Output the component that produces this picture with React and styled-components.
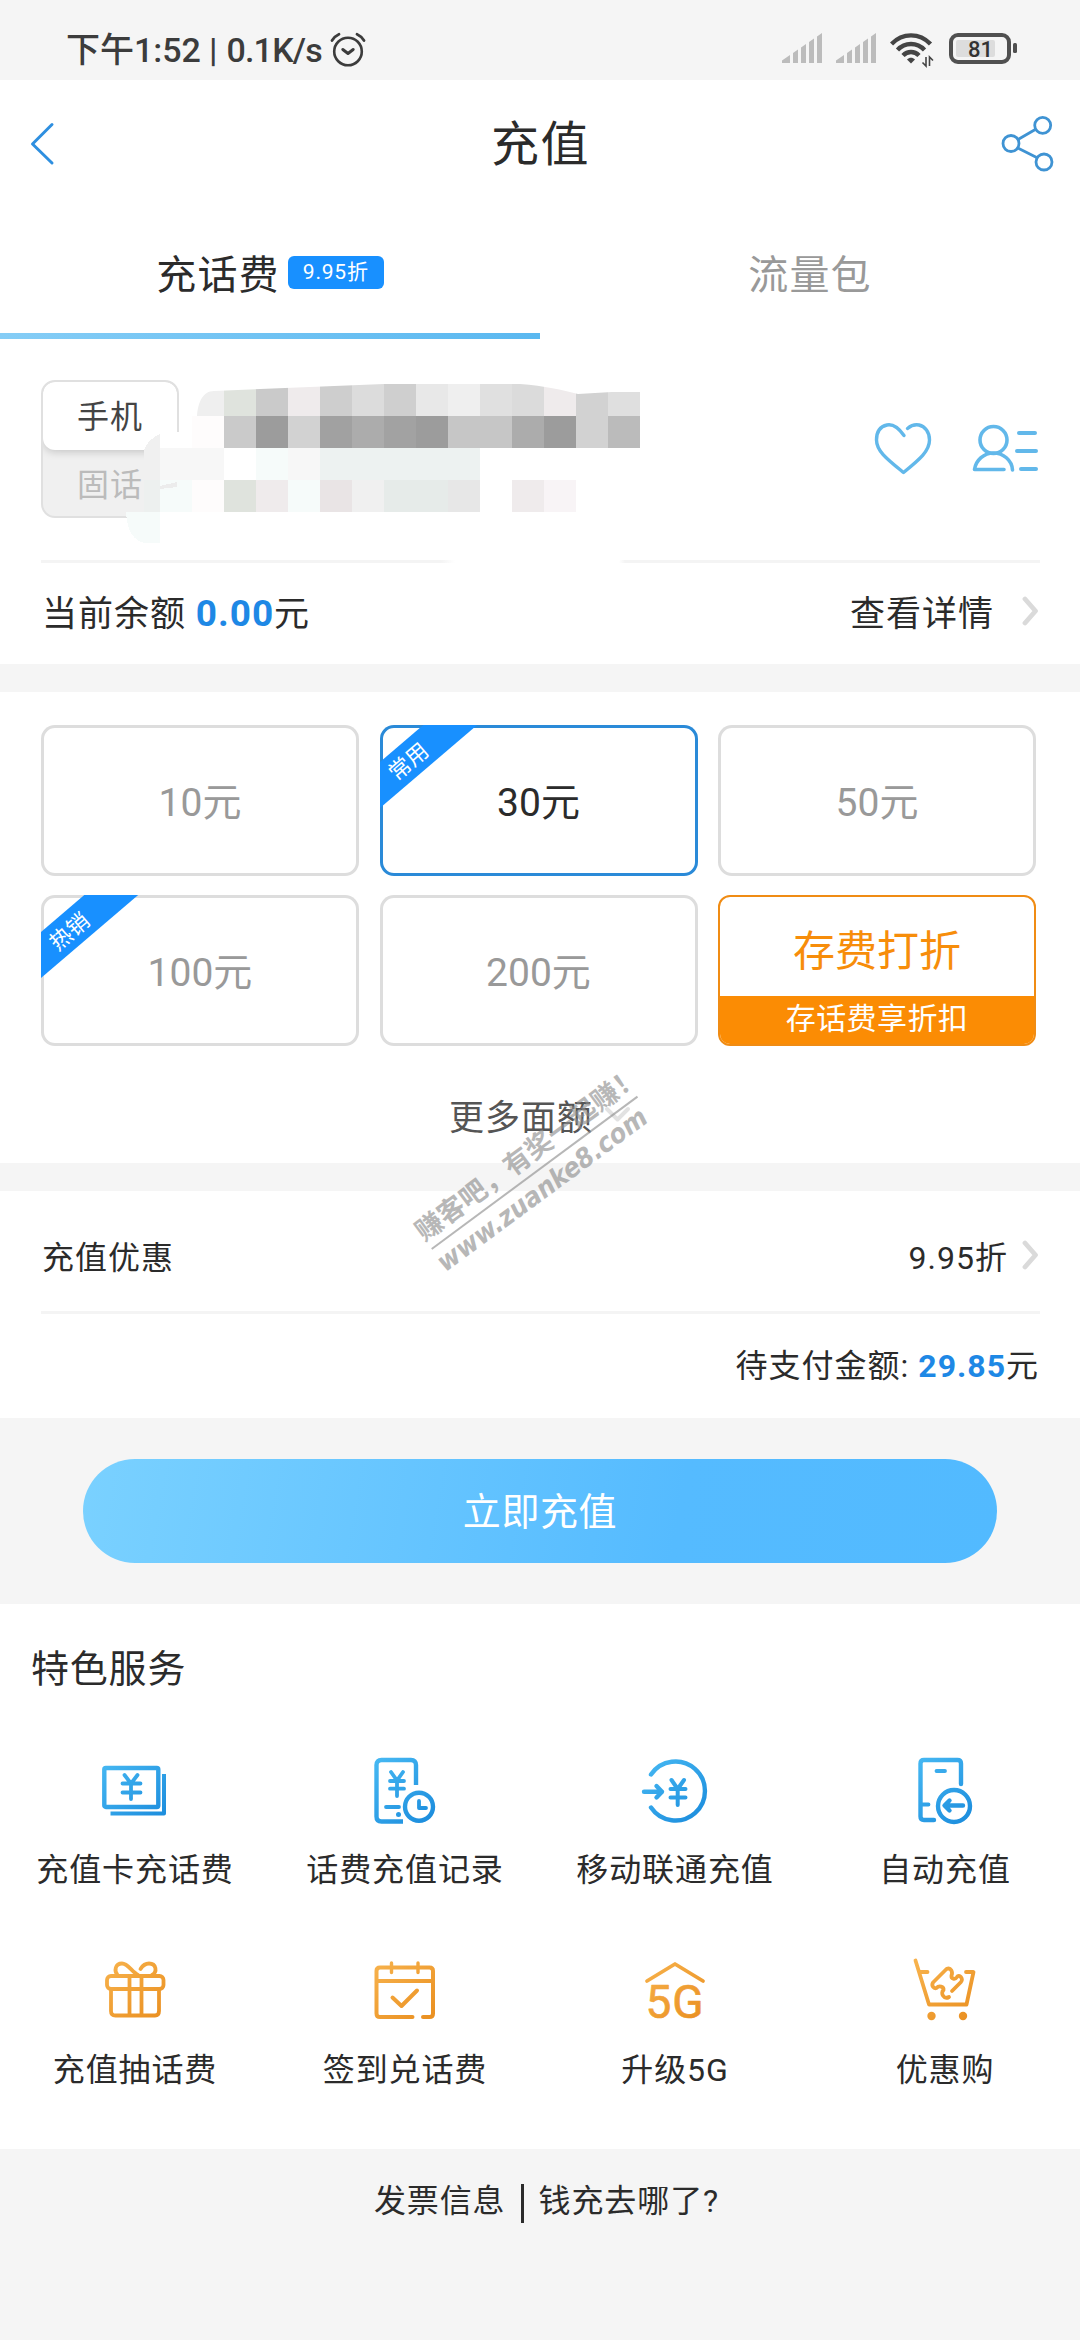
import React from "react";
import styled, { createGlobalStyle, css } from "styled-components";

const GlobalStyle = createGlobalStyle`
	* {
		box-sizing: border-box;
	}
	body {
		margin: 0;
		background: #f5f5f5;
		font-family: Roboto, "Noto Sans CJK SC", sans-serif;
		color: #2b2b2b;
	}
`;

const Page = styled.div`
	position: relative;
	width: 1080px;
	height: 2340px;
	overflow: hidden;
	background: #f5f5f5;
`;

const StatusBar = styled.div`
	height: 80px;
	padding: 0 61px 0 66px;
	display: flex;
	align-items: center;
	justify-content: space-between;
	color: #3c3c3c;
`;
const StatusText = styled.div`
	display: flex;
	align-items: center;
	height: 50px;
	margin-top: 20px;
	font-size: 34px;
	font-weight: 500;
	line-height: 50px;
	white-space: pre;
`;
const StatusTime = styled.span`
	width: 143px;
	letter-spacing: 0;
`;
const StatusSpeed = styled.span`
	width: 113px;
	padding-left: 9px;
	letter-spacing: -0.8px;
`;
const StatusIcons = styled.div`
	display: flex;
	align-items: flex-start;
	height: 36px;
	margin-top: 20px;
`;
const BatterySlot = styled.div`
	margin-left: 15px;
`;

const Header = styled.div`
	height: 130px;
	padding: 0 25px 0 28px;
	display: flex;
	align-items: center;
	justify-content: space-between;
	background: white;
`;
const Title = styled.h1`
	margin: 0 2px 0 0;
	font-size: 48px;
	font-weight: 400;
	line-height: 60px;
	letter-spacing: 1.5px;
`;
const HeaderSide = styled.div`
	width: 56px;
	height: 60px;
	display: flex;
	justify-content: ${(props) => (props.$end ? "flex-end" : "flex-start")};
`;

const Tabs = styled.div`
	display: flex;
	height: 129px;
	background: white;
`;
const Tab = styled.div`
	position: relative;
	flex: 1;
	display: flex;
	align-items: center;
	justify-content: center;
	padding-bottom: 6px;
	font-size: 40px;
	letter-spacing: 1.2px;
	color: #999;
	${(props) =>
		props.$active &&
		css`
			color: #2b2b2b;
			&::after {
				content: "";
				position: absolute;
				left: 0;
				right: 0;
				bottom: 0;
				height: 6px;
				background: linear-gradient(90deg, #85cdf6, #5ab8f0);
			}
		`}
`;
const Badge = styled.span`
	width: 96px;
	height: 33px;
	margin: 2px 0 0 8px;
	border-radius: 6px;
	background: #1890ff;
	color: white;
	font-size: 21px;
	line-height: 33px;
	letter-spacing: 0.8px;
	text-align: center;
`;

const PhoneRow = styled.div`
	position: relative;
	height: 221px;
	padding: 41px 42px 0 41px;
	display: flex;
	justify-content: space-between;
	background: white;
`;
const TypeSwitch = styled.div`
	width: 138px;
	height: 138px;
	border: 2px solid #e0e0e0;
	border-radius: 14px;
	background: #f0f0f0;
	overflow: hidden;
`;
const TypeOption = styled.div`
	height: 68px;
	font-size: 32px;
	line-height: 70px;
	letter-spacing: 1px;
	text-align: center;
	color: #bbb;
	${(props) =>
		props.$active &&
		css`
			border-radius: 12px;
			background: white;
			box-shadow: 0 2px 8px rgba(0, 0, 0, 0.18);
			color: #444;
		`}
`;
const Smudge = styled.svg`
	position: absolute;
	left: 120px;
	top: 37px;
`;
const PhoneActions = styled.div`
	display: flex;
	gap: 40px;
	padding-top: 40px;
`;

const Divider = styled.div`
	height: 3px;
	margin: 0 40px 0 41px;
	background: #f4f4f4;
`;
const BrokenDivider = styled(Divider)`
	background: linear-gradient(
		90deg,
		#f4f4f4 400px,
		transparent 414px,
		transparent 578px,
		#f4f4f4 584px
	);
`;

const Panel = styled.div`
	background: white;
	${(props) =>
		props.$gap &&
		css`
			margin-top: 28px;
		`}
`;
const InfoRow = styled.div`
	height: ${(props) => props.$height}px;
	padding: ${(props) => props.$top || 0}px 41px ${(props) => props.$bottom || 0}px 42px;
	display: flex;
	align-items: center;
	justify-content: ${(props) => (props.$end ? "flex-end" : "space-between")};
	font-size: ${(props) => props.$size}px;
	letter-spacing: 1px;
	white-space: pre;
`;
const RowLink = styled.span`
	display: flex;
	align-items: center;
	gap: ${(props) => props.$gap}px;
`;
const Price = styled.b`
	font-weight: 700;
	font-size: ${(props) => props.$size}px;
	color: #1e88e5;
`;

const AmountGrid = styled.div`
	padding: 33px 44px 0 41px;
	display: grid;
	grid-template-columns: repeat(3, 318px);
	grid-auto-rows: 151px;
	row-gap: 19px;
	justify-content: space-between;
`;
const Amount = styled.div`
	position: relative;
	display: flex;
	align-items: center;
	justify-content: center;
	padding-bottom: 4px;
	border-radius: 14px;
	box-shadow: inset 0 0 0 3px ${(props) => (props.$active ? "#2a8ad8" : "#ddd")};
	font-size: 39px;
	color: ${(props) => (props.$active ? "#2b2b2b" : "#999")};
	overflow: hidden;
`;
const Ribbon = styled.div`
	position: absolute;
	left: -49px;
	top: 16px;
	width: 160px;
	height: 35px;
	padding-right: 8px;
	background: #1890ff;
	color: white;
	font-size: 22px;
	line-height: 38px;
	text-align: center;
	transform: rotate(-40.5deg);
`;
const Promo = styled.div`
	display: flex;
	flex-direction: column;
	border: 2px solid #f08c14;
	border-radius: 12px;
	overflow: hidden;
	text-align: center;
	color: #f78d0a;
`;
const PromoTitle = styled.div`
	height: 99px;
	font-size: 42px;
	line-height: 109px;
`;
const PromoNote = styled.div`
	flex: 1;
	background: #fb8c04;
	color: white;
	font-size: 30px;
	line-height: 46px;
	letter-spacing: 0.4px;
`;
const More = styled.div`
	height: 117px;
	display: flex;
	align-items: center;
	justify-content: center;
	padding: 20px 31px 0 0;
	gap: 9px;
	font-size: 35px;
	letter-spacing: 1px;
	color: #555;
`;
const MoreText = styled.span`
	padding-left: 33px;
`;

const Watermark = styled.div`
	position: absolute;
	left: 406px;
	top: 1132px;
	width: 256px;
	height: 80px;
	color: #8c8c8c;
	opacity: 0.62;
	transform: rotate(-36.5deg);
	pointer-events: none;
	white-space: nowrap;
`;
const Slogan = styled.div`
	height: 40px;
	margin-left: -2px;
	font-family: "Noto Sans CJK SC", sans-serif;
	font-size: 27px;
	font-weight: 700;
	line-height: 40px;
	letter-spacing: 0.3px;
`;
const Site = styled.div`
	border-top: 2px solid #8c8c8c;
	font-family: "DejaVu Sans Condensed", "DejaVu Sans", sans-serif;
	font-size: 27px;
	font-stretch: condensed;
	font-style: italic;
	font-weight: 700;
	line-height: 34px;
	text-indent: -3px;
`;

const Action = styled.div`
	height: 186px;
	padding: 41px 83px 0;
`;
const PayButton = styled.button`
	display: block;
	width: 914px;
	height: 104px;
	padding: 0 0 5px;
	border: none;
	border-radius: 52px;
	background: linear-gradient(100deg, #7ad1ff, #55bbff 65%, #52baff);
	color: white;
	font-family: inherit;
	font-size: 38px;
	letter-spacing: 0.6px;
`;

const Services = styled.div`
	height: 545px;
	padding-top: 40px;
	background: white;
`;
const ServicesTitle = styled.h2`
	margin: 0 0 0 31px;
	font-size: 38px;
	font-weight: 400;
	line-height: 50px;
	letter-spacing: 0.8px;
`;
const ServiceGrid = styled.div`
	display: grid;
	grid-template-columns: repeat(4, 1fr);
	grid-auto-rows: 200px;
	padding-top: 60px;
`;
const Service = styled.div`
	display: flex;
	flex-direction: column;
	align-items: center;
	font-size: 32px;
	line-height: 40px;
	letter-spacing: 0.9px;
`;
const ServiceIcon = styled.svg`
	width: 72px;
	height: 72px;
	margin-bottom: 24px;
	overflow: visible;
	fill: none;
	stroke: url(#${(props) => props.$tone});
	stroke-width: 4.4;
	stroke-linecap: round;
	stroke-linejoin: round;
`;

const Footer = styled.div`
	display: flex;
	align-items: flex-start;
	justify-content: center;
	padding: 35px 0 0 13px;
	font-size: 32px;
	line-height: 34px;
	letter-spacing: 0.9px;
`;
const FooterBar = styled.span`
	width: 3px;
	height: 39px;
	margin: 0 15px;
	background: #2b2b2b;
`;

// blurred phone number: rows of 32px cells, [column, colour, span]
const smudgeRows = [
	[[2, "#efefef"], [3, "#dfe3dd"], [4, "#cacaca"], [5, "#efebec"], [6, "#cecece"], [7, "#dcdcdc"], [8, "#cfcfcf"], [9, "#e8e8e8"], [10, "#efefef"], [11, "#e0e0e0"], [12, "#dbdbdb"], [13, "#efebec"], [14, "#d2d2d2"], [15, "#dfdfdf"]],
	[[2, "#fefcfc"], [3, "#cacaca"], [4, "#9c9c9c"], [5, "#d2d2d2"], [6, "#a1a1a1"], [7, "#acacac"], [8, "#a2a2a2"], [9, "#9c9c9c"], [10, "#c6c6c6", 2], [12, "#acacac"], [13, "#9c9c9c"], [14, "#d2d2d2"], [15, "#bbbbbb"]],
	[[1, "#f7f7f7", 2], [3, "#ffffff"], [4, "#f6fbfa"], [5, "#f7f7f7"], [6, "#edf2f1", 5]],
	[[1, "#f6fbfa"], [2, "#fefcfc"], [3, "#dfe3dd"], [4, "#efebec"], [5, "#f6fbfa"], [6, "#e9e4e5"], [7, "#f0f0f0"], [8, "#e6ebe9", 2], [10, "#e7e7e7"], [12, "#efebec"], [13, "#f8f4f6"]]
];

const PhoneSmudge = () => (
	<Smudge width="530" height="170" viewBox="120 376 530 170" shapeRendering="crispEdges">
		<clipPath id="smudgeTop">
			<path d="M197 416C198 402 203 391 214 391L384 384H520C545 386 562 390 578 394L612 392H640V530H126V416Z" />
		</clipPath>
		<path d="M160 432H200V530H160Z" fill="#fff" />
		<path d="M144 480V450C147 442 153 437 160 434V480Z" fill="#f0f0f0" />
		<path d="M144 480H160V512H144Z" fill="#edf0ef" />
		<path d="M126 512H160V543H145C133 541 127 530 126 512Z" fill="#f6fbfa" />
		<g clipPath="url(#smudgeTop)">
			{smudgeRows.map((row, y) =>
				row.map(([x, fill, span = 1]) => (
					<rect
						key={`${y}-${x}`}
						x={128 + x * 32}
						y={384 + y * 32}
						width={span * 32}
						height="32"
						fill={fill}
					/>
				))
			)}
		</g>
		<path d="M160 486L177 482V487L160 489Z" fill="#ececec" />
	</Smudge>
);

const Gradients = () => (
	<svg width="0" height="0" style={{ position: "absolute" }}>
		<defs>
			<linearGradient id="blue" gradientUnits="userSpaceOnUse" x1="10" y1="5" x2="62" y2="66">
				<stop offset="0" stopColor="#45b7f2" />
				<stop offset="1" stopColor="#1c8ddd" />
			</linearGradient>
			<linearGradient id="orange" gradientUnits="userSpaceOnUse" x1="10" y1="5" x2="60" y2="66">
				<stop offset="0" stopColor="#f7b24c" />
				<stop offset="1" stopColor="#ea9021" />
			</linearGradient>
		</defs>
	</svg>
);

const AlarmIcon = () => (
	<svg width="36" height="36" viewBox="0 0 36 36" fill="none" stroke="#3c3c3c" strokeWidth="3" strokeLinecap="round">
		<circle cx="18" cy="19.5" r="13.8" strokeWidth="2.6" />
		<path d="M12.8 17.5L18 21.5L23.2 17.5" strokeLinejoin="round" />
		<path d="M2 8.5C4 5.5 6 3.5 9 2.2M34 8.5C32 5.5 30 3.5 27 2.2" strokeWidth="2.8" />
	</svg>
);

const SignalIcon = () => (
	<svg width="54" height="36" viewBox="0 0 54 36" fill="#bcbcbc">
		<path d="M0 31V28.5L8 23V31ZM11 31V21L16 17.5V31ZM19 31V15.5L24 12V31ZM27 31V10L32 6.5V31ZM35 31V4.5L40 1V31Z" />
	</svg>
);

const WifiIcon = () => (
	<svg width="44" height="36" viewBox="0 0 44 36" fill="none" stroke="#444" strokeWidth="4.4">
		<path d="M1.5 12C12.5 0.5 29.5 0.5 40.5 12" />
		<path d="M7.5 18C15 10 27 10 34.5 18" />
		<path d="M13 23.5C17.5 18.8 24.5 18.8 29 23.5" />
		<path d="M17 27.5C19.5 25.2 22.5 25.2 25 27.5L21 31.5Z" fill="#444" stroke="none" />
		<path d="M36 25V34L32.5 30.5M39.5 34V25L43 28.5" strokeWidth="1.6" />
	</svg>
);

const BatteryIcon = () => (
	<svg width="70" height="36" viewBox="0 0 70 36">
		<rect x="2" y="3" width="58" height="27" rx="7" fill="none" stroke="#505050" strokeWidth="4" />
		<rect x="7" y="8" width="39" height="17" rx="2" fill="#ddd" />
		<rect x="64" y="11" width="4" height="10" rx="1.5" fill="#505050" />
		<text x="31.5" y="24.5" textAnchor="middle" fontSize="22" fontWeight="500" fontFamily="Roboto" fill="#333">
			81
		</text>
	</svg>
);

const BackIcon = () => (
	<svg width="30" height="60" viewBox="0 0 30 60" fill="none" stroke="#2e8fe0" strokeWidth="3" strokeLinecap="round" strokeLinejoin="round">
		<path d="M24 9.5L4.5 29L24 48" />
	</svg>
);

const ShareIcon = () => (
	<svg width="56" height="60" viewBox="0 0 56 60" fill="none" stroke="#3f93d3" strokeWidth="2.8">
		<circle cx="12" cy="28.5" r="8" />
		<circle cx="43.7" cy="10.3" r="8" />
		<circle cx="45" cy="47" r="8" />
		<path d="M19 24.5L36.7 14.3M18.8 33L38.2 42.8" />
	</svg>
);

const HeartIcon = () => (
	<svg width="58" height="60" viewBox="0 0 58 60" fill="none" stroke="#62b8ea" strokeWidth="3.4" strokeLinecap="round" strokeLinejoin="round">
		<path d="M30 15.5C24 7 18 4 13 5C6 6.5 2.5 12 2.5 20C2.5 31 13 39 29.5 52.5C46 39 55.5 31 55.5 20C55.5 12 51 6.5 45 5C41 4.2 37 5.5 33.5 8.5" />
	</svg>
);

const ContactsIcon = () => (
	<svg width="66" height="60" viewBox="0 0 66 60" fill="none" stroke="#62b8ea" strokeWidth="3.6" strokeLinecap="round" strokeLinejoin="round">
		<circle cx="21.5" cy="20" r="13.5" />
		<path d="M32 49.5H2.5C4 40 12 33 21.5 33C31 33 40 40 40.5 50" />
		<path d="M47 13H63M45 31H64M49 49H64" strokeWidth="4" />
	</svg>
);

const ArrowIcon = () => (
	<svg width="17" height="32" viewBox="0 0 17 32" fill="none" stroke="#dadada" strokeWidth="4.8" strokeLinecap="round" strokeLinejoin="round">
		<path d="M3 4L13.5 16L3 28" />
	</svg>
);

const MoreArrow = () => (
	<svg width="31" height="20" viewBox="0 0 31 20" fill="none" stroke="#e2e2e2" strokeWidth="4" strokeLinecap="round" strokeLinejoin="round">
		<path d="M5 4L15.5 14.5L26 4" />
	</svg>
);

const services = [
	{
		label: "充值卡充话费",
		tone: "blue",
		icon: (
			<>
				<rect x="5.3" y="14" width="54" height="39" rx="1.5" />
				<path d="M11.5 59.5H65V20" strokeLinecap="butt" strokeWidth="4" />
				<path d="M25.5 21L32 29.5L38.5 21M32 29.5V45M23.5 29.5H41.5M23.5 38.5H41.5" strokeWidth="3.8" />
			</>
		)
	},
	{
		label: "话费充值记录",
		tone: "blue",
		icon: (
			<>
				<path d="M47 31V11Q47 6 42 6H12.5Q7.5 6 7.5 11V62.5Q7.5 67.5 12.5 67.5H34" strokeLinecap="butt" />
				<path d="M22 18L28 26.5L34 18M28 26.5V42M21 27H35M21 34.7H35" strokeWidth="3.8" />
				<path d="M17 53H30" strokeWidth="3.8" />
				<circle cx="29.5" cy="60.5" r="2.5" fill="url(#blue)" stroke="none" />
				<circle cx="50" cy="52.7" r="14" />
				<path d="M50 47V54H57" strokeWidth="3.8" />
			</>
		)
	},
	{
		label: "移动联通充值",
		tone: "blue",
		icon: (
			<>
				<path d="M12 20.5A29.5 29.5 0 1 1 12 53.5" />
				<path d="M5 37.7H23M17.5 32L23 37.7L17.5 43.5" />
				<path d="M32.5 26L38.7 35L45 26M38.7 35V51M31.5 35H46.5M31.5 43.5H46.5" strokeWidth="4" />
			</>
		)
	},
	{
		label: "自动充值",
		tone: "blue",
		icon: (
			<>
				<path d="M52 30V9.5Q52 6 48.5 6H15Q11.5 6 11.5 9.5V62.5Q11.5 66 15 66H25" />
				<path d="M27.5 17H36M12 50.5H19.5" strokeWidth="3.8" />
				<circle cx="45" cy="52" r="16" />
				<path d="M54 51.5H36M40.5 46.5L35.5 51.5L40.5 56.5" />
			</>
		)
	},
	{
		label: "充值抽话费",
		tone: "orange",
		icon: (
			<>
				<rect x="8" y="22" width="56.5" height="13" rx="4" strokeWidth="3.8" />
				<path d="M12 35V57Q12 61.5 16.5 61.5H56Q60 61.5 60 57V35M30.5 22V61M42.5 22V61" strokeWidth="3.8" />
				<path d="M39 21C33 18 29 9.5 23 9.5C16 9.5 15 17 18.5 21M41.5 15C44 11 46 9.5 50 9.5C57.5 9.5 58.5 18 53 21" strokeWidth="3.8" />
			</>
		)
	},
	{
		label: "签到兑话费",
		tone: "orange",
		icon: (
			<>
				<path d="M43.5 63H11Q7.5 63 7.5 59.5V17Q7.5 13.5 11 13.5H60.5Q64 13.5 64 17V59.5Q64 63 60.5 63H54M8 27H64" strokeWidth="4" />
				<path d="M22.5 9V18.5M49 9V18.5" strokeWidth="3.4" />
				<path d="M23.5 43.5L32.5 52L48 36.5" strokeWidth="4" />
			</>
		)
	},
	{
		label: "升级5G",
		tone: "orange",
		icon: (
			<>
				<path d="M8 27L36 10L64 27" strokeWidth="3.8" />
				<text x="36" y="64" textAnchor="middle" fontFamily="Roboto" fontSize="46" fill="url(#orange)" strokeWidth="0.7">
					5G
				</text>
			</>
		)
	},
	{
		label: "优惠购",
		tone: "orange",
		icon: (
			<>
				<path d="M6.5 6.5L20 50.5H57.5L64.5 18H57M10.5 18H18.5" strokeWidth="3.8" />
				<path
					d="M43 37L52 28C55 25 50 19.5 48 23C46 26 42 25 42.5 21.5C44 18 42 13 37.5 15L24 28.5C22 32 25 35 27.5 34C30 31 35 32.5 34.5 36C31 39 35 46 40 43"
					strokeWidth="3.8"
				/>
				<circle cx="22.5" cy="62" r="4.2" fill="url(#orange)" stroke="none" />
				<circle cx="54" cy="62" r="4.2" fill="url(#orange)" stroke="none" />
			</>
		)
	}
];

const amounts = [
	{ label: "10元" },
	{ label: "30元", tag: "常用", active: true },
	{ label: "50元" },
	{ label: "100元", tag: "热销" },
	{ label: "200元" }
];

const App = () => (
	<Page>
		<GlobalStyle />
		<Gradients />
		<StatusBar>
			<StatusText>
				<StatusTime>下午1:52</StatusTime>
				<span>|</span>
				<StatusSpeed>0.1K/s</StatusSpeed>
				<AlarmIcon />
			</StatusText>
			<StatusIcons>
				<SignalIcon />
				<SignalIcon />
				<WifiIcon />
				<BatterySlot>
					<BatteryIcon />
				</BatterySlot>
			</StatusIcons>
		</StatusBar>
		<Header>
			<HeaderSide>
				<BackIcon />
			</HeaderSide>
			<Title>充值</Title>
			<HeaderSide $end>
				<ShareIcon />
			</HeaderSide>
		</Header>
		<Tabs>
			<Tab $active>
				充话费<Badge>9.95折</Badge>
			</Tab>
			<Tab>流量包</Tab>
		</Tabs>

		<Panel>
			<PhoneRow>
				<TypeSwitch>
					<TypeOption $active>手机</TypeOption>
					<TypeOption>固话</TypeOption>
				</TypeSwitch>
				<PhoneSmudge />
				<PhoneActions>
					<HeartIcon />
					<ContactsIcon />
				</PhoneActions>
			</PhoneRow>
			<BrokenDivider />
			<InfoRow $height={101} $size={35} $bottom={6}>
				<span>
					当前余额 <Price $size={37}>0.00</Price>元
				</span>
				<RowLink $gap={28}>
					查看详情
					<ArrowIcon />
				</RowLink>
			</InfoRow>
		</Panel>

		<Panel $gap>
			<AmountGrid>
				{amounts.map((item) => (
					<Amount key={item.label} $active={item.active}>
						{item.tag && <Ribbon>{item.tag}</Ribbon>}
						{item.label}
					</Amount>
				))}
				<Promo>
					<PromoTitle>存费打折</PromoTitle>
					<PromoNote>存话费享折扣</PromoNote>
				</Promo>
			</AmountGrid>
			<More>
				<MoreText>更多面额</MoreText>
				<MoreArrow />
			</More>
		</Panel>

		<Panel $gap>
			<InfoRow $height={120} $size={32} $top={8}>
				<span>充值优惠</span>
				<RowLink $gap={14}>
					9.95折
					<ArrowIcon />
				</RowLink>
			</InfoRow>
			<Divider />
			<InfoRow $height={104} $size={32} $bottom={6} $end>
				<span>
					待支付金额: <Price $size={32}>29.85</Price>元
				</span>
			</InfoRow>
		</Panel>

		<Action>
			<PayButton type="button">立即充值</PayButton>
		</Action>

		<Services>
			<ServicesTitle>特色服务</ServicesTitle>
			<ServiceGrid>
				{services.map((item) => (
					<Service key={item.label}>
						<ServiceIcon viewBox="0 0 72 72" $tone={item.tone}>
							{item.icon}
						</ServiceIcon>
						{item.label}
					</Service>
				))}
			</ServiceGrid>
		</Services>

		<Footer>
			<span>发票信息</span>
			<FooterBar />
			<span>钱充去哪了?</span>
		</Footer>

		<Watermark>
			<Slogan>赚客吧，有奖一起赚！</Slogan>
			<Site>www.zuanke8.com</Site>
		</Watermark>
	</Page>
);

export default App;
